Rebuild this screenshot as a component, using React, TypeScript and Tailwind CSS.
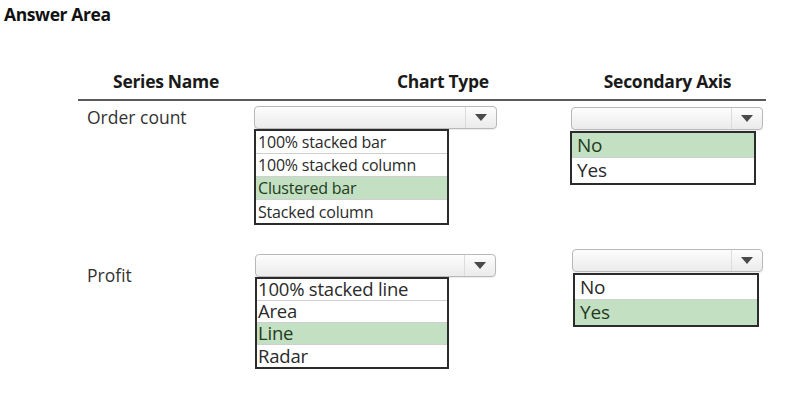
import type { ReactNode } from 'react'

type Opt = { label: string; on?: boolean }

// ── Closed combo box with the arrow cell on the right ─────────────────────
function Combo({ w }: { w: string }) {
  return (
    <div className={`${w} h-[23px] flex rounded-[4px] border border-[#b9b9b9] bg-gradient-to-b from-[#fdfdfd] to-[#ebebeb] shadow-[0_1px_1px_rgba(0,0,0,0.08)]`}>
      <div className="flex-1" />
      <div className="w-[31px] flex items-center justify-center border-l border-[#dcdcdc]">
        <svg viewBox="0 0 12 7" className="w-[12px] h-[7px]">
          <polygon points="0,0 12,0 6,7" fill="#4a4a4a" />
        </svg>
      </div>
    </div>
  )
}

// ── Open list of answer options ───────────────────────────────────────────
function OptList({ w, rowH, text, pad, items }: { w: string; rowH: string; text: string; pad: string; items: Opt[] }) {
  return (
    <div className={`${w} border-2 border-[#2b2b2b] bg-white`}>
      {items.map((it, i) => (
        <div
          key={it.label}
          className={`${rowH} flex items-center ${pad} ${text} leading-none tracking-[-0.2px] ${
            i < items.length - 1 ? 'border-b border-[#cfcfcf]' : ''
          } ${it.on ? 'bg-[#c4e0c3] text-[#1e3b1e]' : 'text-[#2a2a2a]'}`}
        >
          {it.label}
        </div>
      ))}
    </div>
  )
}

function Label({ children, pt }: { children: ReactNode; pt: string }) {
  return <div className={`${pt} pl-[9px] text-[17.5px] leading-[24px] text-[#333]`}>{children}</div>
}

export default function App() {
  return (
    <div className="w-[785px] h-[398px] overflow-hidden bg-white text-[#1a1a1a]" style={{ fontFamily: '"Open Sans", "Noto Sans", sans-serif' }}>

      {/* ══════════════ TITLE ══════════════ */}
      <div className="pt-[2px] pl-[4px] text-[17.5px] leading-[24px] font-bold tracking-[-0.4px] text-[#111]">Answer Area</div>

      {/* ══════════════ TABLE ══════════════ */}
      <div className="ml-[78px] w-[688px] mt-[43px]">

        {/* Header */}
        <div className="grid grid-cols-[176px_315px_197px] border-b-[2px] border-[#5a5a5a] h-[32px] text-[17.5px] leading-[24px] font-bold text-[#1a1a1a] tracking-[-0.3px]">
          <div className="text-center">Series Name</div>
          <div className="pl-[143px]">Chart Type</div>
          <div className="text-center">Secondary Axis</div>
        </div>

        {/* Row 1 — Order count */}
        <div className="grid grid-cols-[176px_315px_197px] items-start">
          <Label pt="pt-[4px]">Order count</Label>
          <div className="pt-[5px]">
            <Combo w="w-[243px]" />
            <OptList
              w="w-[195px]"
              rowH="h-[23px]"
              text="text-[16px]"
              pad="pl-[2px]"
              items={[
                { label: '100% stacked bar' },
                { label: '100% stacked column' },
                { label: 'Clustered bar', on: true },
                { label: 'Stacked column' },
              ]}
            />
          </div>
          <div className="pt-[6px] pl-[1px]">
            <div className="pl-[1px]"><Combo w="w-[192px]" /></div>
            <div className="pt-[1px]">
              <OptList
                w="w-[186px]"
                rowH="h-[25px]"
                text="text-[19px]"
                pad="pl-[5px]"
                items={[{ label: 'No', on: true }, { label: 'Yes' }]}
              />
            </div>
          </div>
        </div>

        {/* Row 2 — Profit */}
        <div className="grid grid-cols-[176px_315px_197px] items-start mt-[24px]">
          <Label pt="pt-[14px]">Profit</Label>
          <div className="pt-[5px] pl-[1px]">
            <Combo w="w-[241px]" />
            <OptList
              w="w-[194px]"
              rowH="h-[22px]"
              text="text-[18.5px]"
              pad="pl-[1px]"
              items={[
                { label: '100% stacked line' },
                { label: 'Area' },
                { label: 'Line', on: true },
                { label: 'Radar' },
              ]}
            />
          </div>
          <div className="pl-[3px]">
            <Combo w="w-[191px]" />
            <div className="pl-[1px] pt-[1px]">
              <OptList
                w="w-[186px]"
                rowH="h-[25px]"
                text="text-[19px]"
                pad="pl-[5px]"
                items={[{ label: 'No' }, { label: 'Yes', on: true }]}
              />
            </div>
          </div>
        </div>

      </div>
    </div>
  )
}
